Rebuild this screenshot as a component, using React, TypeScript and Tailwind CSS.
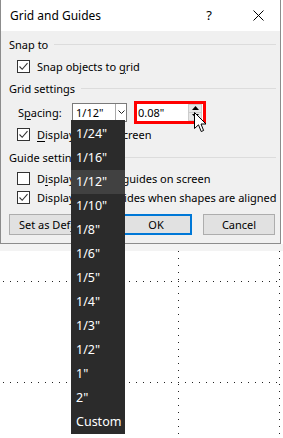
import React from "react";

const sizes = ['1/24"', '1/16"', '1/12"', '1/10"', '1/8"', '1/6"', '1/5"', '1/4"', '1/3"', '1/2"', '1"', '2"', "Custom"];

function CheckBox({ checked }: { checked?: boolean }) {
  return (
    <span className="flex h-[13px] w-[13px] shrink-0 items-center justify-center border border-[#333333] bg-white">
      {checked ? (
        <svg width="11" height="11" viewBox="0 0 11 11">
          <path d="M1.5 5.5 L4.2 8.3 L9.5 2.2" fill="none" stroke="#333" strokeWidth="1.1" />
        </svg>
      ) : null}
    </span>
  );
}

function SectionHeader({ label, className }: { label: string; className: string }) {
  return (
    <div className={`flex items-center pl-[8px] pr-[4px] ${className}`}>
      <span>{label}</span>
      <span className="ml-[6px] h-px flex-1 bg-[#dcdcdc]" />
    </div>
  );
}

function CheckRow({ checked, className, children }: { checked?: boolean; className: string; children: React.ReactNode }) {
  return (
    <div className={`flex items-center pl-[16px] ${className}`}>
      <CheckBox checked={checked} />
      <span className="ml-[7px] whitespace-nowrap">{children}</span>
    </div>
  );
}

function Btn({ children, primary, className }: { children: React.ReactNode; primary?: boolean; className: string }) {
  return (
    <div
      className={`flex h-[21px] items-center bg-[#e1e1e1] ${
        primary ? "border-2 border-[#0078d7]" : "border border-[#adadad]"
      } ${className}`}
    >
      {children}
    </div>
  );
}

export default function App() {
  return (
    <div className="relative h-[438px] w-[283px] overflow-hidden bg-white font-['Noto_Sans',sans-serif] text-[11px] leading-none text-black">
      <div className="w-[281px] border-x border-b border-[#8c8c8c] bg-[#f0f0f0]">
        <div className="flex h-[31px] items-center bg-white pl-[9px]">
          <span className="text-[12px]">Grid and Guides</span>
          <span className="ml-auto mr-[41px] text-[13px]">?</span>
          <svg className="mr-[16px]" width="11" height="11" viewBox="0 0 11 11">
            <path d="M0.5 0.5 L10.5 10.5 M10.5 0.5 L0.5 10.5" stroke="#000" strokeWidth="1" />
          </svg>
        </div>

        <SectionHeader label="Snap to" className="h-[26px]" />
        <CheckRow checked className="h-[18px]">
          Snap objects to <span className="underline underline-offset-2">g</span>rid
        </CheckRow>
        <SectionHeader label="Grid settings" className="h-[26px]" />

        <div className="flex h-[22px] items-center pl-[17px]">
          <span className="w-[54px]">
            S<span className="underline underline-offset-2">p</span>acing:
          </span>
          <div className="flex h-[19px] w-[55px] items-stretch border border-[#7a7a7a] bg-white">
            <span className="flex flex-1 items-center pl-[3px]">1/12"</span>
            <span className="flex w-[11px] items-center justify-center border-l border-[#aaaaaa]">
              <svg width="7" height="4" viewBox="0 0 7 4">
                <path d="M0.5 0.5 L3.5 3.5 L6.5 0.5" fill="none" stroke="#222" strokeWidth="1" />
              </svg>
            </span>
          </div>
          <div className="ml-[7px] flex h-[23px] w-[72px] items-stretch border-[3px] border-[#ff0000] bg-white">
            <span className="flex flex-1 items-center pl-[1px]">0.08"</span>
            <span className="mr-[1px] flex w-[14px] flex-col">
              <span className="flex flex-1 items-center justify-center border border-[#cccccc] bg-[#e6e6e6]">
                <svg width="7" height="4" viewBox="0 0 7 4"><path d="M0 4 L3.5 0 L7 4 Z" fill="#000" /></svg>
              </span>
              <span className="flex flex-1 items-center justify-center border border-t-0 border-[#cccccc] bg-[#e6e6e6]">
                <svg width="7" height="4" viewBox="0 0 7 4"><path d="M0 0 L3.5 4 L7 0 Z" fill="#000" /></svg>
              </span>
            </span>
          </div>
        </div>

        <CheckRow checked className="h-[22px]">
          <span className="underline underline-offset-2">D</span>isplay grid on screen
        </CheckRow>
        <SectionHeader label="Guide settings" className="h-[24px]" />
        <CheckRow className="h-[18px]">
          D<span className="underline underline-offset-2">i</span>splay drawing guides on screen
        </CheckRow>
        <CheckRow checked className="h-[20px]">
          Display smart guides when shapes are aligned
        </CheckRow>

        <div className="mt-[7px] flex pb-[8px] pl-[8px]">
          <Btn className="w-[104px] pl-[9px]">
            Set as Def<span className="underline underline-offset-2">a</span>ult
          </Btn>
          <Btn primary className="ml-[7px] w-[72px] justify-center">OK</Btn>
          <Btn className="ml-[11px] w-[72px] justify-center">Cancel</Btn>
        </div>
      </div>

      <div className="h-[7px] w-full bg-[#f3f3f3]" />
      <svg width="283" height="188" viewBox="0 250 283 188" className="block">
        <g stroke="#222" strokeWidth="1" strokeDasharray="1 6">
          <path d="M3 280.5 H283" />
          <path d="M3 381.5 H283" />
          <path d="M178.5 250 V438" />
          <path d="M279.5 250 V438" />
        </g>
      </svg>

      <div className="absolute left-[71px] top-[120px] w-[54px] bg-[#2b2b2b] pt-[2px] text-[12.5px] text-white">
        {sizes.map((s) => (
          <div key={s} className={`flex h-[24px] items-center pl-[5px] ${s === '1/12"' ? "bg-[#414141]" : ""}`}>
            {s}
          </div>
        ))}
      </div>

      <svg className="absolute left-[194px] top-[112px]" width="13" height="21" viewBox="0 0 13 21">
        <path
          d="M0.5 0.5 L0.5 16.5 L4.5 12.8 L7.2 19.5 L9.6 18.5 L7 12 L12 12 Z"
          fill="#fff"
          stroke="#000"
          strokeWidth="1"
          strokeLinejoin="round"
        />
      </svg>
    </div>
  );
}
